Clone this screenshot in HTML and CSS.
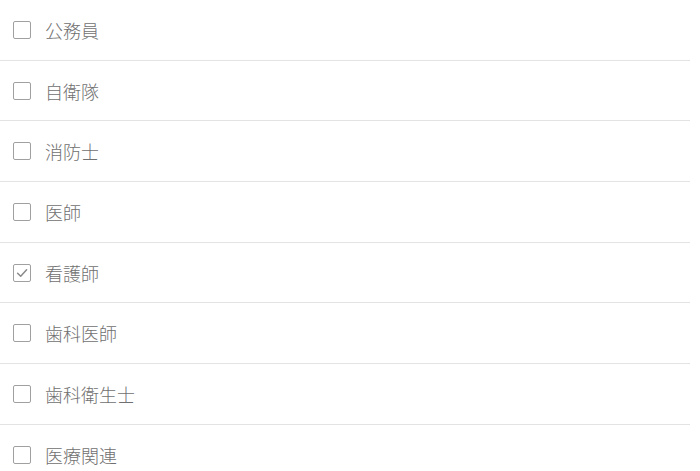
FILE: index.html
```html
<!DOCTYPE html>
<html lang="ja">
<head>
<meta charset="utf-8">
<link rel="stylesheet" href="styles.css">
</head>
<body>
<ul class="list">
  <li class="row"><span class="box"></span><span class="label">公務員</span></li>
  <li class="row"><span class="box"></span><span class="label">自衛隊</span></li>
  <li class="row"><span class="box"></span><span class="label">消防士</span></li>
  <li class="row"><span class="box"></span><span class="label">医師</span></li>
  <li class="row"><span class="box checked"><svg viewBox="0 0 18 18" width="18" height="18"><path d="M4.6 9.3 L7.7 12.3 L13.6 5.7" fill="none" stroke="#8a8a8a" stroke-width="1.5" stroke-linecap="round" stroke-linejoin="round"/></svg></span><span class="label">看護師</span></li>
  <li class="row"><span class="box"></span><span class="label">歯科医師</span></li>
  <li class="row"><span class="box"></span><span class="label">歯科衛生士</span></li>
  <li class="row last"><span class="box"></span><span class="label">医療関連</span></li>
</ul>
</body>
</html>
```
FILE: styles.css
```css
html, body {
  margin: 0;
  padding: 0;
  background: #fff;
}
body {
  font-family: "Noto Sans CJK JP", "Noto Sans", sans-serif;
  width: 700px;
  height: 471px;
  overflow: hidden;
}
.list {
  list-style: none;
  margin: 0;
  padding: 0;
  width: 690px;
}
.row {
  display: flex;
  align-items: center;
  height: 59.7px;
  border-bottom: 1px solid #e3e3e3;
  padding-left: 13px;
  gap: 14px;
}
.row.last {
  border-bottom: none;
}
.box {
  width: 18px;
  height: 18px;
  box-sizing: border-box;
  border: 1.4px solid #a0a0a0;
  border-radius: 2px;
  display: flex;
  align-items: center;
  justify-content: center;
}
.box svg {
  display: block;
  flex: none;
}
.label {
  font-size: 18px;
  font-weight: 300;
  color: #707070;
  line-height: 1;
}
```
